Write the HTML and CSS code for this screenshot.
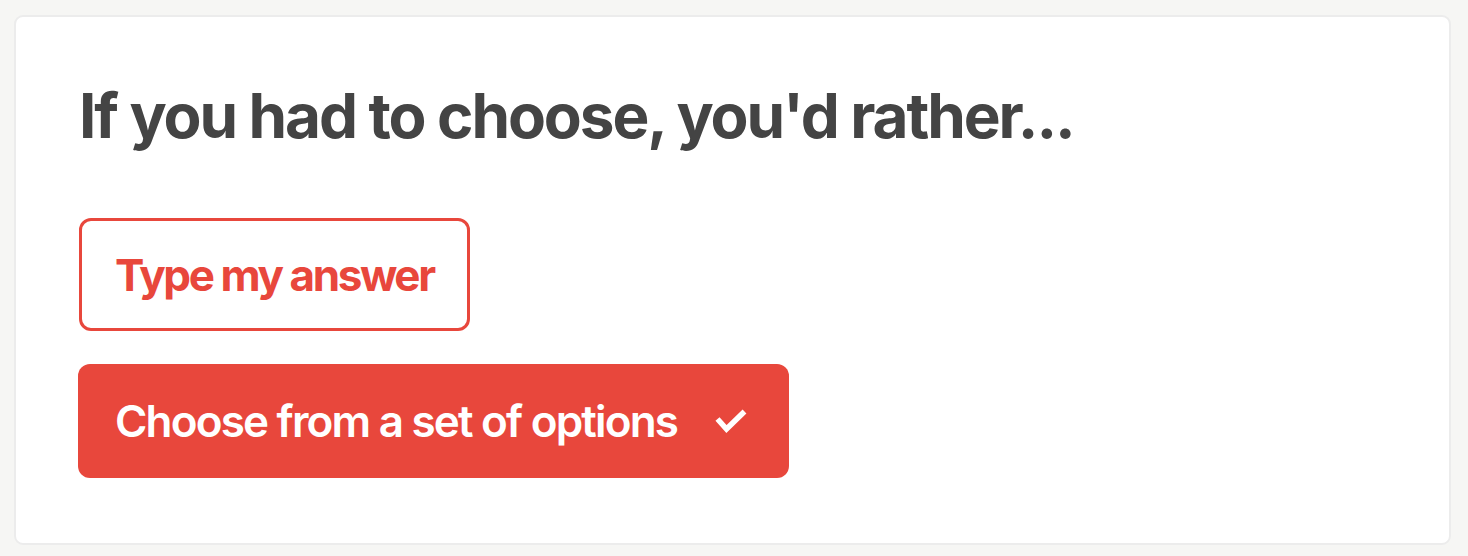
FILE: index.html
```html
<!DOCTYPE html>
<html>
<head>
<meta charset="utf-8">
<link rel="stylesheet" href="styles.css">
</head>
<body>
<div class="card">
  <h1 class="title">If you had to choose, you'd rather...</h1>
  <div class="options">
    <button class="opt opt-outline">Type my answer</button>
    <button class="opt opt-filled">Choose from a set of options
      <svg class="check" width="32" height="26" viewBox="0 0 32 26"><path d="M2.5 11 L11.5 21 L29.5 3.5" fill="none" stroke="#fff" stroke-width="5.5"/></svg>
    </button>
  </div>
</div>
</body>
</html>
```
FILE: styles.css
```css
html, body { margin: 0; padding: 0; }
body {
  background: #f6f6f4;
  font-family: Inter, "Liberation Sans", sans-serif;
  padding: 15px 17px 11px 14px;
  height: 556px;
  box-sizing: border-box;
}
.card {
  background: #fff;
  border: 2px solid #ececec;
  border-radius: 9px;
  height: 100%;
  box-sizing: border-box;
  padding: 68px 62px 0 62px;
}
.title {
  margin: 0 0 0 1px;
  font-size: 62px;
  font-weight: 700;
  color: #444;
  letter-spacing: -2.1px;
  line-height: 62px;
}
.options {
  display: flex;
  flex-direction: column;
  align-items: flex-start;
  gap: 33px;
  margin-top: 71px;
}
.opt {
  font-family: inherit;
  font-size: 44px;
  font-weight: 700;
  border-radius: 12px;
  box-sizing: border-box;
  display: flex;
  align-items: center;
  letter-spacing: -2.4px;
}
.opt-outline {
  height: 113px;
  margin-left: 1px;
  background: #fff;
  border: 3px solid #e8473c;
  color: #e8473c;
  padding: 0 33px 0 33px;
}
.opt-filled {
  height: 114px;
  background: #e8473c;
  border: none;
  color: #fff;
  padding: 0 42px 0 37px;
  font-weight: 600;
  letter-spacing: -1.8px;
  gap: 38px;
}
.check { display: block; }
```
